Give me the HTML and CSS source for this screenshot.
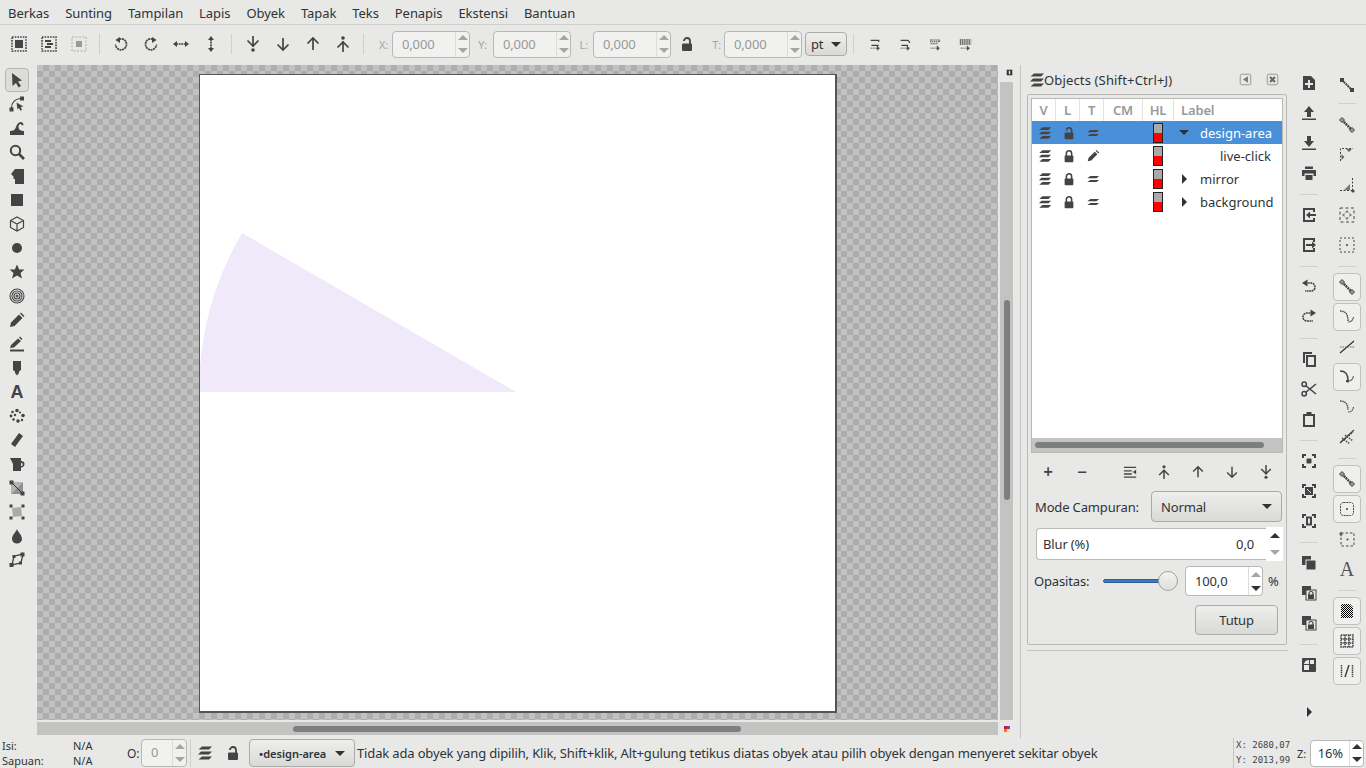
FILE: index.html
```html
<!DOCTYPE html>
<html>
<head>
    <title>Inkscape</title>
    <link rel="stylesheet" href="styles.css">
</head>
<body>
    <!-- Icon sprites -->
    <svg class="sprites" width="0" height="0">
        <defs>
            <symbol id="i-sel-all" viewBox="0 0 16 16"><rect x="1" y="1" width="14" height="14" fill="none" stroke="#444" stroke-width="1.600" stroke-dasharray="1.600 1.100"/><rect x="4" y="4" width="8" height="8"/></symbol>
            <symbol id="i-sel-layers" viewBox="0 0 16 16"><rect x="1" y="1" width="14" height="14" fill="none" stroke="#444" stroke-width="1.600" stroke-dasharray="1.600 1.100"/><path d="M4 4h6v2H4zM6 7h6v2H6zM4 10h6v2H4z"/></symbol>
            <symbol id="i-desel" viewBox="0 0 16 16"><rect x="1" y="1" width="14" height="14" fill="none" stroke="#aaa" stroke-width="1" stroke-dasharray="2 1.500"/><rect x="5" y="5" width="6" height="6" fill="#999"/></symbol>
            <symbol id="i-rot-ccw" viewBox="0 0 16 16"><path d="M4 4.500a5.500 5.500 0 1 1-1.500 4" fill="none" stroke="#444" stroke-width="1.700" stroke-dasharray="2 .6"/><path d="M7 1v6L2.500 4z"/></symbol>
            <symbol id="i-rot-cw" viewBox="0 0 16 16"><path d="M12 4.500a5.500 5.500 0 1 0 1.500 4" fill="none" stroke="#444" stroke-width="1.700" stroke-dasharray="2 .6"/><path d="M9 1v6l4.500-3z"/></symbol>
            <symbol id="i-flip-h" viewBox="0 0 16 16"><path d="M3 8h10" stroke="#444" stroke-width="1.600" stroke-dasharray="2 .6"/><path d="M0 8l4-3v6zM16 8l-4-3v6z"/></symbol>
            <symbol id="i-flip-v" viewBox="0 0 16 16"><path d="M8 3v10" stroke="#444" stroke-width="1.600" stroke-dasharray="2 .6"/><path d="M8 0l-3 4h6zM8 16l-3-4h6z"/></symbol>
            <symbol id="i-lower-bottom" viewBox="0 0 16 16"><path d="M8 0v11M2.500 4.500L8 10l5.500-5.500" fill="none" stroke="#444" stroke-width="1.700"/><circle cx="8" cy="14" r="1.800"/></symbol>
            <symbol id="i-lower" viewBox="0 0 16 16"><path d="M8 2v12M2.500 8.500L8 14l5.500-5.500" fill="none" stroke="#444" stroke-width="1.700"/></symbol>
            <symbol id="i-raise" viewBox="0 0 16 16"><path d="M8 14V2M2.500 7.500L8 2l5.500 5.500" fill="none" stroke="#444" stroke-width="1.700"/></symbol>
            <symbol id="i-raise-top" viewBox="0 0 16 16"><path d="M8 16V5M2.500 11.500L8 6l5.500 5.500" fill="none" stroke="#444" stroke-width="1.700"/><circle cx="8" cy="2" r="1.800"/></symbol>
            <symbol id="i-lock" viewBox="0 0 16 16"><path d="M5 8V5a3 3 0 0 1 6 0v3" fill="none" stroke="#444" stroke-width="1.800"/><rect x="3" y="7.500" width="10" height="7.500" rx="1"/></symbol>
            <symbol id="i-unlock" viewBox="0 0 16 16"><path d="M5 5a3 3 0 0 1 6 0v3" fill="none" stroke="#444" stroke-width="1.800"/><rect x="3" y="7.500" width="10" height="7.500" rx="1"/></symbol>
            <symbol id="i-layers" viewBox="0 0 16 16"><path d="M5 1.500h10l-3 3H1.500zM4 6.500h11l-3 3H1zM5 11.500h10l-3 3H1.500z"/></symbol>
            <symbol id="i-slant" viewBox="0 0 16 16"><path d="M5 4.500h10l-3 2.500H1.500zM5 9h10l-3 2.500H1.500z"/></symbol>
            <symbol id="i-pencil" viewBox="0 0 16 16"><path d="M2 14l1-4 7-7 3 3-7 7zM11 2l1-1 3 3-1 1z"/></symbol>
            <symbol id="i-trans-1" viewBox="0 0 16 16"><path d="M2 3h10v2M12 9H3" fill="none" stroke="#444" stroke-width="1.500"/><path d="M2 12.500h8M10 10l3 2.500-3 2.500z" stroke="#444" stroke-dasharray="1.500 .8"/></symbol>
            <symbol id="i-trans-2" viewBox="0 0 16 16"><path d="M2 3h9l2 2v1M3 9h8" fill="none" stroke="#444" stroke-width="1.500"/><path d="M2 12.500h8M10 10l3 2.500-3 2.500z" stroke="#444" stroke-dasharray="1.500 .8"/></symbol>
            <symbol id="i-trans-3" viewBox="0 0 16 16"><path d="M2 2.500h11v2H2zM2 7h9" fill="none" stroke="#444" stroke-width="1.300" stroke-dasharray="1.500 .8"/><path d="M2 12.500h8M10 10l3 2.500-3 2.500z" stroke="#444" stroke-dasharray="1.500 .8"/></symbol>
            <symbol id="i-trans-4" viewBox="0 0 16 16"><path d="M1 2.500h14M1 5h14M1 7.500h14" fill="none" stroke="#444" stroke-width="1.800" stroke-dasharray="1.500 .8"/><path d="M2 12.500h8M10 10l3 2.500-3 2.500z" stroke="#444" stroke-dasharray="1.500 .8"/></symbol>

            <symbol id="t-select" viewBox="0 0 16 16"><path d="M3 1l10 7.500-4 1 3 4.500-2.500 1.500L7 11l-3.500 3z"/></symbol>
            <symbol id="t-node" viewBox="0 0 16 16"><rect x="0.500" y="11.500" width="4" height="4"/><rect x="11" y="0.500" width="4" height="4"/><path d="M2.500 12C2.500 7 5.500 3.500 11 2.500" fill="none" stroke="#444" stroke-width="1.200"/><path d="M7.500 6.500l7 4-2.700.5 1.200 3-1.500.8-1.500-2.800-1.500 1.500z"/></symbol>
            <symbol id="t-tweak" viewBox="0 0 16 16"><path d="M1 15v-4c3 0 5-1 6-4 1-3 3-5.500 5-5 2 .5 2.500 2 2.500 3l-1.500.500c-.5-1.500-2-2-3-.5-1 2-.5 4 1 5 1 .7 3 1 4 1v4z"/></symbol>
            <symbol id="t-zoom" viewBox="0 0 16 16"><circle cx="6.500" cy="6.500" r="4.700" fill="none" stroke="#444" stroke-width="2"/><path d="M10 10l5 5" stroke="#444" stroke-width="2.600"/></symbol>
            <symbol id="t-pages" viewBox="0 0 16 16"><path d="M6 1h9v15H6v-5H4.500V8.500L2 6z"/></symbol>
            <symbol id="t-rect" viewBox="0 0 16 16"><rect x="2" y="2" width="12" height="12"/></symbol>
            <symbol id="t-box" viewBox="0 0 16 16"><path d="M8 1l6.500 3.500v7L8 15l-6.500-3.500v-7zM1.500 4.500L8 8l6.500-3.500M8 8v7" fill="none" stroke="#444" stroke-width="1.200"/></symbol>
            <symbol id="t-ellipse" viewBox="0 0 16 16"><circle cx="8" cy="8" r="5"/></symbol>
            <symbol id="t-star" viewBox="0 0 16 16"><path d="M8 0.500l2.200 5H15.500l-4 3.600 1.500 5.400L8 11.500 3 14.500l1.500-5.400-4-3.600H5.800z"/></symbol>
            <symbol id="t-spiral" viewBox="0 0 16 16"><g fill="none" stroke="#444" stroke-width="1.100"><circle cx="8" cy="8" r="7"/><circle cx="8" cy="8" r="5"/><circle cx="8" cy="8" r="3"/><circle cx="8" cy="8" r="1"/></g></symbol>
            <symbol id="t-pencil" viewBox="0 0 16 16"><path d="M1 15l1-4.500L10 2.500l3.500 3.500-8 8zM11 1.500l1-1 3.500 3.500-1 1z"/></symbol>
            <symbol id="t-pen" viewBox="0 0 16 16"><path d="M1 12l1-3 7-6.500L12 5l-7 6.500zM10 1.500l1-1L13.500 3l-1 1zM1 13.500h14V15.500H1z"/></symbol>
            <symbol id="t-callig" viewBox="0 0 16 16"><path d="M4 1h8v9l-2 1.500V13l-2 2.500L6 13v-1.500L4 10z"/></symbol>
            <symbol id="t-spray" viewBox="0 0 16 16"><circle cx="8" cy="2.500" r="1.800"/><circle cx="3.500" cy="4" r="1.300"/><circle cx="11" cy="4.500" r="1.100"/><circle cx="2" cy="8" r="1.400"/><circle cx="6" cy="7" r="1.200"/><circle cx="14" cy="7.500" r="1.800"/><circle cx="4.500" cy="11.500" r="1.300"/><circle cx="9" cy="13" r="1.800"/><circle cx="13" cy="12" r="1.200"/></symbol>
            <symbol id="t-eraser" viewBox="0 0 16 16"><path d="M10 1l4 3-8 11-4-3z"/></symbol>
            <symbol id="t-bucket" viewBox="0 0 16 16"><path d="M1 2h11v3c2 0 3.500 1 3.500 3s-1.500 3.500-3.500 3.500V15H4V8z"/><path d="M12 7v3c1 0 1.700-.5 1.700-1.500S13 7 12 7z" fill="#e8e8e7"/></symbol>
            <symbol id="t-gradient" viewBox="0 0 16 16"><path d="M2 2h12L2 14z" fill="#b4b4b4"/><path d="M14 2v12H2z" fill="#909090"/><path d="M2 2l12 12" stroke="#222" stroke-width=".9"/><rect x="0.500" y="0.500" width="4" height="4"/><rect x="11.500" y="11.500" width="4" height="4"/></symbol>
            <symbol id="t-mesh" viewBox="0 0 16 16"><path d="M3 4l9-1 1 9-9 1z" fill="#aaa"/><rect x="0.500" y="0.500" width="3" height="3"/><rect x="12.500" y="0.500" width="3" height="3"/><rect x="0.500" y="12.500" width="3" height="3"/><rect x="12.500" y="12.500" width="3" height="3"/></symbol>
            <symbol id="t-dropper" viewBox="0 0 16 16"><path d="M8 1c1 3 5 6 5 10a5 4.500 0 0 1-10 0c0-4 4-7 5-10z"/></symbol>
            <symbol id="t-connector" viewBox="0 0 16 16"><path d="M3 13L5 4l9-2-2 9z" fill="none" stroke="#444" stroke-width="1.300"/><rect x="0.500" y="11" width="4" height="4"/><rect x="11.500" y="0.500" width="4" height="4"/><rect x="10" y="9.500" width="3" height="3"/><rect x="3.500" y="3" width="3" height="3"/></symbol>

            <symbol id="c-new" viewBox="0 0 16 16"><path fill-rule="evenodd" d="M2 1h8l4 4v10H2zM7 5v3H4v2h3v3h2v-3h3V8H9V5z"/></symbol>
            <symbol id="c-open" viewBox="0 0 16 16"><path d="M8 1l5 6h-3v5H6V7H3zM1 13.500h14V15H1z"/></symbol>
            <symbol id="c-save" viewBox="0 0 16 16"><path d="M6 1h4v5h3l-5 6-5-6h3zM1 13.500h14V15H1z"/></symbol>
            <symbol id="c-print" viewBox="0 0 16 16"><path d="M4 1.500h8V4H4zM1 5h14v6h-2.500V8.500h-9V11H1zM4.500 10h7v5h-7z"/></symbol>
            <symbol id="c-import" viewBox="0 0 16 16"><path fill-rule="evenodd" d="M2 1h12v4h-2V3H4v10h8v-2h2v4H2z"/><path d="M5 8l4-3.500V7h6v2H9v2.500z"/></symbol>
            <symbol id="c-export" viewBox="0 0 16 16"><path fill-rule="evenodd" d="M2 1h12v4h-2V3H4v10h8v-2h2v4H2z"/><path d="M15 8l-4-3.500V7H5v2h6v2.500z"/></symbol>
            <symbol id="c-undo" viewBox="0 0 16 16"><path d="M4 4h6a4 4 0 0 1 0 8H4" fill="none" stroke="#444" stroke-width="1.600" stroke-dasharray="2 .6"/><path d="M6.500 0.500v7L1 4z"/></symbol>
            <symbol id="c-redo" viewBox="0 0 16 16"><path d="M12 4H6a4 4 0 0 0 0 8h6" fill="none" stroke="#444" stroke-width="1.600" stroke-dasharray="2 .6"/><path d="M9.500 0.500v7L15 4z"/></symbol>
            <symbol id="c-copy" viewBox="0 0 16 16"><path d="M2 1h9v2H4v9H2z"/><path fill-rule="evenodd" d="M5 4h10v12H5zM7 6v8h6V6z"/></symbol>
            <symbol id="c-cut" viewBox="0 0 16 16"><path d="M4.500 4.500L15 13M4.500 11.500L15 3" stroke="#444" stroke-width="1.600"/><circle cx="3.200" cy="3.200" r="2.200" fill="none" stroke="#444" stroke-width="1.500"/><circle cx="3.200" cy="12.800" r="2.200" fill="none" stroke="#444" stroke-width="1.500"/></symbol>
            <symbol id="c-paste" viewBox="0 0 16 16"><path fill-rule="evenodd" d="M5.500 1h5v2H14v13H2V3h3.500zM4 5v9h8V5z"/></symbol>
            <symbol id="c-zoom-sel" viewBox="0 0 16 16"><path d="M2 5V2h3M11 2h3v3M14 11v3h-3M5 14H2v-3" fill="none" stroke="#444" stroke-width="2"/><rect x="5.500" y="5.500" width="5" height="5" rx="1"/></symbol>
            <symbol id="c-zoom-draw" viewBox="0 0 16 16"><path d="M2 5V2h3M11 2h3v3M14 11v3h-3M5 14H2v-3" fill="none" stroke="#444" stroke-width="2"/><path d="M4 4h8v8H4z"/><path d="M6 6l4 4" stroke="#e8e8e7"/></symbol>
            <symbol id="c-zoom-page" viewBox="0 0 16 16"><path d="M2 5V2h3M11 2h3v3M14 11v3h-3M5 14H2v-3" fill="none" stroke="#444" stroke-width="2"/><path fill-rule="evenodd" d="M5 3.500h6v9H5zM7 5.500v5h2v-5z"/></symbol>
            <symbol id="c-dup" viewBox="0 0 16 16"><rect x="1" y="1" width="9" height="9"/><rect x="5" y="5" width="10" height="10" stroke="#e8e8e7"/></symbol>
            <symbol id="c-clone" viewBox="0 0 16 16"><rect x="1" y="1" width="9" height="9"/><rect x="5" y="5" width="10" height="10" fill="#e8e8e7" stroke="#444"/><path d="M8 10V8.500a2 2 0 0 1 4 0V10" fill="none" stroke="#444" stroke-width="1.200"/><rect x="7" y="9.500" width="6" height="4.500"/></symbol>
            <symbol id="c-unclone" viewBox="0 0 16 16"><rect x="1" y="1" width="9" height="9"/><rect x="5" y="5" width="10" height="10" fill="#e8e8e7" stroke="#444"/><path d="M8 8.500a2 2 0 0 1 4 0V10" fill="none" stroke="#444" stroke-width="1.200"/><rect x="7" y="9.500" width="6" height="4.500"/></symbol>
            <symbol id="c-group" viewBox="0 0 16 16"><path fill-rule="evenodd" d="M2 1h12a1 1 0 0 1 1 1v12a1 1 0 0 1-1 1H2a1 1 0 0 1-1-1V2a1 1 0 0 1 1-1zM3 8v5h5V8zM8 3a5 5 0 0 0-5 4h5zM9 3v4h4V3z"/></symbol>

            <symbol id="s-enable" viewBox="0 0 16 16"><path d="M3 3l10 10" stroke="#444" stroke-width="2" stroke-dasharray="2 .6"/><rect x="1" y="1" width="4" height="4"/><rect x="11" y="11" width="4" height="4"/></symbol>
            <symbol id="s-node-line" viewBox="0 0 16 16"><path d="M3 3l10 10" stroke="#444" stroke-width="2.500" stroke-dasharray="2 .6"/><path d="M3 .5L5.500 3 3 5.500.5 3zM13 10.500l2.500 2.500-2.500 2.500-2.500-2.500z" stroke="#444" fill="#999"/></symbol>
            <symbol id="s-corners" viewBox="0 0 16 16"><path d="M1.500 14V1.500H14" fill="none" stroke="#444" stroke-dasharray="2 1.500"/><path d="M7 2h6L10 5zM2.500 7v6L5.500 10z" fill="#666"/></symbol>
            <symbol id="s-midpoint" viewBox="0 0 16 16"><path d="M1 13.500h12M13.500 1v12" fill="none" stroke="#444" stroke-dasharray="2 1.500"/><path d="M5 13l6-6v6z" fill="#777"/><circle cx="14" cy="14" r="1.600"/></symbol>
            <symbol id="s-bbox-mid" viewBox="0 0 16 16"><rect x="1" y="1" width="14" height="14" fill="none" stroke="#444" stroke-dasharray="3 2.500"/><path d="M8 3l2 2.500H6zM8 13l2-2.500H6zM3 8l2.500-2v4zM13 8l-2.500-2v4z" fill="#777"/></symbol>
            <symbol id="s-center" viewBox="0 0 16 16"><rect x="1" y="1" width="14" height="14" fill="none" stroke="#444" stroke-dasharray="2 2"/><circle cx="8" cy="8" r="1"/></symbol>
            <symbol id="s-path" viewBox="0 0 16 16"><path d="M1 2c5 0 8 2.500 8 10" fill="none" stroke="#444" stroke-dasharray="1.500 .7" stroke-width="1.400"/><path d="M9 13c3 0 5-1.500 5.500-5" fill="none" stroke="#666" stroke-width="1.200"/></symbol>
            <symbol id="s-path-node" viewBox="0 0 16 16"><path d="M1 2c5 0 8 2.500 8 9" fill="none" stroke="#444" stroke-width="1.400"/><path d="M9 12c3 0 5-1.500 5.500-5" fill="none" stroke="#666" stroke-width="1.200"/><circle cx="8.500" cy="12" r="1.600"/></symbol>
            <symbol id="s-cross" viewBox="0 0 16 16"><path d="M1 14L15 2" stroke="#333" stroke-width="1.200"/><path d="M1 8h14" stroke="#666" stroke-dasharray="1.500 1"/></symbol>
            <symbol id="s-smooth" viewBox="0 0 16 16"><path d="M1 2c5 0 8 2.500 8 9" fill="none" stroke="#444" stroke-dasharray="1.500 .7" stroke-width="1.400"/><path d="M9 13c3 0 5-1.500 5.500-5" fill="none" stroke="#555" stroke-dasharray="1.500 .7" stroke-width="1.200"/></symbol>
            <symbol id="s-guide" viewBox="0 0 16 16"><path d="M1 14L15 1" stroke="#444" stroke-width="1.200"/><path d="M3 9l8 6M6 6l8 6M2 13L14 3" stroke="#444" stroke-dasharray="1.500 1" stroke-width="1.500"/></symbol>
            <symbol id="s-page-box" viewBox="0 0 16 16"><rect x="1.500" y="1.500" width="13" height="13" rx="3" fill="none" stroke="#444" stroke-dasharray="2 .8"/><circle cx="8" cy="8" r="1"/></symbol>
            <symbol id="s-rotcenter" viewBox="0 0 16 16"><rect x="2" y="2" width="13" height="13" fill="none" stroke="#444" stroke-dasharray="2.500 2"/><circle cx="8.500" cy="8.500" r="1"/><path d="M2 .5L4 3 2 5.500 0 3z" fill="#666"/></symbol>
            <symbol id="s-page" viewBox="0 0 16 16"><pattern id="p-dots" width="2" height="2" patternUnits="userSpaceOnUse"><rect width="1" height="1"/><rect x="1" y="1" width="1" height="1"/></pattern><path d="M2 1h9l3 3v11H2z" fill="url(#p-dots)"/></symbol>
            <symbol id="s-grid" viewBox="0 0 16 16"><path d="M2 2h12v12H2zM6 2v12M10 2v12M2 6h12M2 10h12" fill="none" stroke="#444" stroke-width="1.500" stroke-dasharray="1.500 .7"/></symbol>
            <symbol id="s-guides" viewBox="0 0 16 16"><path d="M2.500 2v12M13.500 2v12" stroke="#444" stroke-width="1.500" stroke-dasharray="1.500 .7"/><path d="M10 2L6 14" stroke="#444" stroke-width="1.500"/></symbol>

            <symbol id="d-indent" viewBox="0 0 16 16"><path d="M1 2h14v1.500H1zM1 6h9v1.500H1zM1 9.500h9V11H1zM1 13h14v1.500H1zM15 5.500v5L11 8z"/></symbol>
            <symbol id="d-close" viewBox="0 0 16 16"><rect x="1.500" y="1.500" width="13" height="13" rx="2" fill="none" stroke="#888"/><path d="M5 5l6 6M11 5l-6 6" stroke="#666" stroke-width="2.500"/></symbol>
            <symbol id="d-collapse" viewBox="0 0 16 16"><rect x="1.500" y="1.500" width="13" height="13" rx="2" fill="none" stroke="#888"/><path d="M11 4v8L5 8z" fill="#777"/></symbol>
            <symbol id="d-mini" viewBox="0 0 10 10"><path d="M1 1h8v8H1z"/><path d="M4 2.500h2v5H4z" fill="#e8e8e7"/></symbol>
            <symbol id="d-colors" viewBox="0 0 6 6"><path d="M0 0h3v3H0z" fill="#c2185b"/><path d="M3 0h3v3H3z" fill="#7b3fc4"/><path d="M0 3h3v3H0z" fill="#f57c00"/><path d="M3 3h3v3H3z" fill="#ffeb3b"/></symbol>
        </defs>
    </svg>

    <div class="menubar">
        <span>Berkas</span><span>Sunting</span><span>Tampilan</span><span>Lapis</span><span>Obyek</span><span>Tapak</span><span>Teks</span><span>Penapis</span><span>Ekstensi</span><span>Bantuan</span>
    </div>

    <!-- Top tool controls -->
    <div class="toolbar">
        <span class="tbtn"><svg class="ic"><use href="#i-sel-all"/></svg></span>
        <span class="tbtn"><svg class="ic"><use href="#i-sel-layers"/></svg></span>
        <span class="tbtn"><svg class="ic"><use href="#i-desel"/></svg></span>
        <i class="vsep"></i>
        <span class="tbtn"><svg class="ic"><use href="#i-rot-ccw"/></svg></span>
        <span class="tbtn"><svg class="ic"><use href="#i-rot-cw"/></svg></span>
        <span class="tbtn"><svg class="ic"><use href="#i-flip-h"/></svg></span>
        <span class="tbtn"><svg class="ic"><use href="#i-flip-v"/></svg></span>
        <i class="vsep"></i>
        <span class="tbtn"><svg class="ic"><use href="#i-lower-bottom"/></svg></span>
        <span class="tbtn"><svg class="ic"><use href="#i-lower"/></svg></span>
        <span class="tbtn"><svg class="ic"><use href="#i-raise"/></svg></span>
        <span class="tbtn"><svg class="ic"><use href="#i-raise-top"/></svg></span>
        <i class="vsep"></i>
        <span class="coord-label label-x">X:</span>
        <div class="spin spin-off coord"><span class="spin-val">0,000</span><span class="spin-arrows"><b class="up"></b><b class="down"></b></span></div>
        <span class="coord-label label-y">Y:</span>
        <div class="spin spin-off coord"><span class="spin-val">0,000</span><span class="spin-arrows"><b class="up"></b><b class="down"></b></span></div>
        <span class="coord-label label-l">L:</span>
        <div class="spin spin-off coord"><span class="spin-val">0,000</span><span class="spin-arrows"><b class="up"></b><b class="down"></b></span></div>
        <span class="lock-btn"><svg class="ic"><use href="#i-unlock"/></svg></span>
        <span class="coord-label label-t">T:</span>
        <div class="spin spin-off coord"><span class="spin-val">0,000</span><span class="spin-arrows"><b class="up"></b><b class="down"></b></span></div>
        <div class="select unit-select"><span>pt</span><b class="caret"></b></div>
        <i class="vsep vsep-unit"></i>
        <span class="tbtn"><svg class="ic ic-trans"><use href="#i-trans-1"/></svg></span>
        <span class="tbtn"><svg class="ic ic-trans"><use href="#i-trans-2"/></svg></span>
        <span class="tbtn"><svg class="ic ic-trans"><use href="#i-trans-3"/></svg></span>
        <span class="tbtn"><svg class="ic ic-trans"><use href="#i-trans-4"/></svg></span>
    </div>

    <div class="main">
        <!-- Left toolbox -->
        <div class="toolbox">
            <span class="tool tool-on"><svg class="ic"><use href="#t-select"/></svg></span>
            <span class="tool"><svg class="ic"><use href="#t-node"/></svg></span>
            <span class="tool"><svg class="ic"><use href="#t-tweak"/></svg></span>
            <span class="tool"><svg class="ic"><use href="#t-zoom"/></svg></span>
            <span class="tool"><svg class="ic"><use href="#t-pages"/></svg></span>
            <span class="tool"><svg class="ic"><use href="#t-rect"/></svg></span>
            <span class="tool"><svg class="ic"><use href="#t-box"/></svg></span>
            <span class="tool"><svg class="ic"><use href="#t-ellipse"/></svg></span>
            <span class="tool"><svg class="ic"><use href="#t-star"/></svg></span>
            <span class="tool"><svg class="ic"><use href="#t-spiral"/></svg></span>
            <span class="tool"><svg class="ic"><use href="#t-pencil"/></svg></span>
            <span class="tool"><svg class="ic"><use href="#t-pen"/></svg></span>
            <span class="tool"><svg class="ic"><use href="#t-callig"/></svg></span>
            <span class="tool tool-text">A</span>
            <span class="tool"><svg class="ic"><use href="#t-spray"/></svg></span>
            <span class="tool"><svg class="ic"><use href="#t-eraser"/></svg></span>
            <span class="tool"><svg class="ic"><use href="#t-bucket"/></svg></span>
            <span class="tool"><svg class="ic"><use href="#t-gradient"/></svg></span>
            <span class="tool"><svg class="ic"><use href="#t-mesh"/></svg></span>
            <span class="tool"><svg class="ic"><use href="#t-dropper"/></svg></span>
            <span class="tool"><svg class="ic"><use href="#t-connector"/></svg></span>
        </div>

        <!-- Canvas with its scrollbars -->
        <div class="workspace">
            <div class="canvas-row">
                <div class="canvas">
                    <div class="page">
                        <svg class="artwork" width="636" height="636" viewBox="200 75 636 636"><path d="M516 392L242 233A317 317 0 0 0 199 392Z" fill="#efe9f9"/></svg>
                    </div>
                </div>
                <div class="vscroll">
                    <svg class="ruler-mini"><use href="#d-mini"/></svg>
                    <div class="vtrack"><div class="vthumb"></div></div>
                </div>
            </div>
            <div class="hscroll-row">
                <div class="htrack"><div class="hthumb"></div></div>
                <svg class="cms-mini"><use href="#d-colors"/></svg>
            </div>
        </div>

        <!-- Objects dock -->
        <div class="dock">
            <div class="dock-title">
                <svg class="ic"><use href="#i-layers"/></svg>
                <span class="dock-name">Objects (Shift+Ctrl+J)</span>
                <svg class="ic dock-btn"><use href="#d-collapse"/></svg>
                <svg class="ic dock-btn dock-close"><use href="#d-close"/></svg>
            </div>
            <div class="dock-frame">
                <div class="objects">
                    <div class="obj-row obj-head">
                        <span>V</span><span>L</span><span>T</span><span>CM</span><span>HL</span><span class="head-label">Label</span>
                    </div>
                    <div class="obj-row obj-selected">
                        <span class="obj-flag"><svg class="ic ic-sm"><use href="#i-layers"/></svg></span>
                        <span class="obj-flag"><svg class="ic ic-sm"><use href="#i-unlock"/></svg></span>
                        <span class="obj-flag"><svg class="ic ic-sm"><use href="#i-slant"/></svg></span>
                        <span></span>
                        <span><i class="swatch"></i></span>
                        <span class="obj-label"><b class="tree-open"></b>design-area</span>
                    </div>
                    <div class="obj-row">
                        <span class="obj-flag"><svg class="ic ic-sm"><use href="#i-layers"/></svg></span>
                        <span class="obj-flag"><svg class="ic ic-sm"><use href="#i-lock"/></svg></span>
                        <span class="obj-flag"><svg class="ic ic-sm"><use href="#i-pencil"/></svg></span>
                        <span></span>
                        <span><i class="swatch"></i></span>
                        <span class="obj-label obj-child">live-click</span>
                    </div>
                    <div class="obj-row">
                        <span class="obj-flag"><svg class="ic ic-sm"><use href="#i-layers"/></svg></span>
                        <span class="obj-flag"><svg class="ic ic-sm"><use href="#i-lock"/></svg></span>
                        <span class="obj-flag"><svg class="ic ic-sm"><use href="#i-slant"/></svg></span>
                        <span></span>
                        <span><i class="swatch"></i></span>
                        <span class="obj-label"><b class="tree-closed"></b>mirror</span>
                    </div>
                    <div class="obj-row">
                        <span class="obj-flag"><svg class="ic ic-sm"><use href="#i-layers"/></svg></span>
                        <span class="obj-flag"><svg class="ic ic-sm"><use href="#i-lock"/></svg></span>
                        <span class="obj-flag"><svg class="ic ic-sm"><use href="#i-slant"/></svg></span>
                        <span></span>
                        <span><i class="swatch"></i></span>
                        <span class="obj-label"><b class="tree-closed"></b>background</span>
                    </div>
                    <div class="obj-fill"></div>
                    <div class="obj-scroll"><div class="obj-thumb"></div></div>
                </div>

                <div class="obj-actions">
                    <span class="plusminus">+</span>
                    <span class="plusminus">−</span>
                    <span class="obj-spacer"></span>
                    <svg class="ic ic-act"><use href="#d-indent"/></svg>
                    <svg class="ic ic-act"><use href="#i-raise-top"/></svg>
                    <svg class="ic ic-act"><use href="#i-raise"/></svg>
                    <svg class="ic ic-act"><use href="#i-lower"/></svg>
                    <svg class="ic ic-act"><use href="#i-lower-bottom"/></svg>
                </div>

                <div class="blend-row">
                    <span>Mode Campuran:</span>
                    <div class="select blend-select"><span>Normal</span><b class="caret"></b></div>
                </div>

                <div class="blur-row">
                    <div class="blur-field"><span>Blur (%)</span><span>0,0</span></div>
                    <div class="blur-arrows"><b class="up"></b><b class="down dim"></b></div>
                </div>

                <div class="opacity-row">
                    <span class="opacity-label">Opasitas:</span>
                    <div class="slider"><i class="slider-fill"></i><i class="slider-knob"></i></div>
                    <div class="spin opacity-spin"><span class="spin-val">100,0</span><span class="spin-arrows"><b class="up dim"></b><b class="down"></b></span></div>
                    <span class="opacity-unit">%</span>
                </div>

                <div class="close-row"><span class="close-btn">Tutup</span></div>
            </div>
            <div class="dock-rule"></div>
        </div>

        <!-- Commands bar -->
        <div class="cmdbar">
            <span class="cmd"><svg class="ic"><use href="#c-new"/></svg></span>
            <span class="cmd"><svg class="ic"><use href="#c-open"/></svg></span>
            <span class="cmd"><svg class="ic"><use href="#c-save"/></svg></span>
            <span class="cmd"><svg class="ic"><use href="#c-print"/></svg></span>
            <i class="hsep"></i>
            <span class="cmd"><svg class="ic"><use href="#c-import"/></svg></span>
            <span class="cmd"><svg class="ic"><use href="#c-export"/></svg></span>
            <i class="hsep"></i>
            <span class="cmd"><svg class="ic"><use href="#c-undo"/></svg></span>
            <span class="cmd"><svg class="ic"><use href="#c-redo"/></svg></span>
            <i class="hsep"></i>
            <span class="cmd"><svg class="ic"><use href="#c-copy"/></svg></span>
            <span class="cmd"><svg class="ic"><use href="#c-cut"/></svg></span>
            <span class="cmd"><svg class="ic"><use href="#c-paste"/></svg></span>
            <i class="hsep"></i>
            <span class="cmd"><svg class="ic"><use href="#c-zoom-sel"/></svg></span>
            <span class="cmd"><svg class="ic"><use href="#c-zoom-draw"/></svg></span>
            <span class="cmd"><svg class="ic"><use href="#c-zoom-page"/></svg></span>
            <i class="hsep"></i>
            <span class="cmd"><svg class="ic"><use href="#c-dup"/></svg></span>
            <span class="cmd"><svg class="ic"><use href="#c-clone"/></svg></span>
            <span class="cmd"><svg class="ic"><use href="#c-unclone"/></svg></span>
            <i class="hsep"></i>
            <span class="cmd"><svg class="ic"><use href="#c-group"/></svg></span>
            <b class="more-arrow"></b>
        </div>

        <!-- Snap bar -->
        <div class="snapbar">
            <span class="cmd"><svg class="ic"><use href="#s-enable"/></svg></span>
            <i class="hsep hsep-first"></i>
            <span class="cmd"><svg class="ic"><use href="#s-node-line"/></svg></span>
            <span class="cmd"><svg class="ic"><use href="#s-corners"/></svg></span>
            <span class="cmd"><svg class="ic"><use href="#s-midpoint"/></svg></span>
            <span class="cmd"><svg class="ic"><use href="#s-bbox-mid"/></svg></span>
            <span class="cmd"><svg class="ic"><use href="#s-center"/></svg></span>
            <i class="hsep"></i>
            <span class="cmd cmd-on"><svg class="ic"><use href="#s-node-line"/></svg></span>
            <span class="cmd cmd-on"><svg class="ic"><use href="#s-path"/></svg></span>
            <span class="cmd"><svg class="ic"><use href="#s-cross"/></svg></span>
            <span class="cmd cmd-on"><svg class="ic"><use href="#s-path-node"/></svg></span>
            <span class="cmd"><svg class="ic"><use href="#s-smooth"/></svg></span>
            <span class="cmd"><svg class="ic"><use href="#s-guide"/></svg></span>
            <i class="hsep"></i>
            <span class="cmd cmd-on"><svg class="ic"><use href="#s-node-line"/></svg></span>
            <span class="cmd cmd-on"><svg class="ic"><use href="#s-page-box"/></svg></span>
            <span class="cmd"><svg class="ic"><use href="#s-rotcenter"/></svg></span>
            <span class="cmd snap-text">A</span>
            <i class="hsep"></i>
            <span class="cmd cmd-on"><svg class="ic"><use href="#s-page"/></svg></span>
            <span class="cmd cmd-on"><svg class="ic"><use href="#s-grid"/></svg></span>
            <span class="cmd cmd-on"><svg class="ic"><use href="#s-guides"/></svg></span>
        </div>
    </div>

    <!-- Status bar -->
    <div class="statusbar">
        <div class="style-info">
            <span>Isi:</span><span>N/A</span>
            <span>Sapuan:</span><span>N/A</span>
        </div>
        <span class="o-label">O:</span>
        <div class="spin spin-off o-spin"><span class="spin-val">0</span><span class="spin-arrows"><b class="up"></b><b class="down"></b></span></div>
        <i class="vsep vsep-status"></i>
        <span class="status-icon"><svg class="ic"><use href="#i-layers"/></svg></span>
        <span class="status-icon"><svg class="ic"><use href="#i-unlock"/></svg></span>
        <div class="select layer-select"><span>•design-area</span><b class="caret"></b></div>
        <span class="status-msg">Tidak ada obyek yang dipilih, Klik, Shift+klik, Alt+gulung tetikus diatas obyek atau pilih obyek dengan menyeret sekitar obyek</span>
        <div class="coords"><span>X: 2680,07</span><span>Y: 2013,99</span></div>
        <span class="z-label">Z:</span>
        <div class="spin z-spin"><span class="spin-val">16%</span><span class="spin-arrows"><b class="up"></b><b class="down"></b></span></div>
    </div>
</body>
</html>
```

FILE: styles.css
```css
/* Reset default margin and padding */
* {
    margin: 0;
    padding: 0;
    box-sizing: border-box;
}

body {
    width: 1366px;
    height: 768px;
    overflow: hidden;
    display: flex;
    flex-direction: column;
    background-color: #e8e8e7;
    color: #2e3436;
    font-family: "Noto Sans", sans-serif;
    font-size: 13px;
    letter-spacing: -0.15px;
}

.sprites {
    position: absolute;
}

i, b {
    display: block;
}

.ic {
    width: 16px;
    height: 16px;
    fill: #444;
    display: block;
    flex: none;
}

.ic-trans {
    width: 13px;
    height: 13px;
}

/* Menu bar */
.menubar {
    height: 25px;
    flex: none;
    display: flex;
    align-items: center;
    gap: 16px;
    padding: 1px 8px 0;
    border-bottom: 1px solid #cfcfcd;
    letter-spacing: -0.07px;
}

/* Top toolbar */
.toolbar {
    height: 38px;
    margin-bottom: 2px;
    flex: none;
    display: flex;
    align-items: center;
    padding-left: 4px;
}

.tbtn {
    width: 30px;
    height: 30px;
    display: flex;
    align-items: center;
    justify-content: center;
}

.vsep {
    width: 1px;
    height: 20px;
    margin: 0 6px 0 5px;
    background-color: #cfcfcd;
}

.coord-label {
    color: #a5a5a5;
    font-size: 11px;
    text-align: right;
    padding-right: 4px;
}

.label-x { width: 22px; }
.label-y { width: 23px; padding-right: 6px; }
.label-l { width: 22px; padding-right: 5px; }
.label-t { width: 21px; padding-right: 3px; }

.lock-btn {
    width: 32px;
    display: flex;
    justify-content: center;
}

/* Spin buttons */
.spin {
    height: 27px;
    display: flex;
    background-color: #fff;
    border: 1px solid #b8b8b6;
    border-radius: 4px;
    flex: none;
}

.spin-off {
    background-color: #f1f1f0;
    color: #999;
}

.spin-val {
    flex: 1;
    padding-left: 9px;
    line-height: 25px;
    font-size: 13px;
}

.spin-arrows {
    width: 14px;
    display: flex;
    flex-direction: column;
    border-left: 1px solid #dcdcda;
}

.spin-arrows b,
.blur-arrows b {
    flex: 1;
    display: flex;
    align-items: center;
    justify-content: center;
}

.up::before,
.down::before {
    content: "";
    border-left: 5px solid transparent;
    border-right: 5px solid transparent;
}

.up::before { border-bottom: 5px solid #2e3436; }
.down::before { border-top: 5px solid #2e3436; }

.spin-off .up::before,
.dim.up::before { border-bottom-color: #a5a5a5; }

.spin-off .down::before,
.dim.down::before { border-top-color: #a5a5a5; }

.coord {
    width: 78px;
}

/* Dropdown buttons */
.select {
    display: flex;
    align-items: center;
    justify-content: space-between;
    background: linear-gradient(#eeeeec, #d9d9d6);
    border: 1px solid #aaaaa8;
    border-radius: 4px;
    flex: none;
}

.caret {
    border-left: 5px solid transparent;
    border-right: 5px solid transparent;
    border-top: 5px solid #2e3436;
}

.unit-select {
    width: 42px;
    height: 24px;
    margin-left: 3px;
    padding: 0 5px;
}

.vsep-unit {
    margin: 0 6px;
}

/* Main row */
.main {
    flex: 1;
    display: flex;
    min-height: 0;
}

/* Left toolbox */
.toolbox {
    width: 37px;
    flex: none;
    display: flex;
    flex-direction: column;
    padding: 3px 0 0 5px;
}

.tool {
    width: 24px;
    height: 24px;
    display: flex;
    align-items: center;
    justify-content: center;
    border: 1px solid transparent;
    border-radius: 4px;
}

.tool-on {
    background-color: #dcdcda;
    border-color: #b8b8b6;
}

.tool-text {
    font-family: "Liberation Sans", sans-serif;
    font-size: 18px;
    font-weight: bold;
    color: #444;
}

/* Workspace */
.workspace {
    width: 984px;
    flex: none;
    display: flex;
    flex-direction: column;
    border-right: 1px solid #c4c4c2;
}

.canvas-row {
    height: 655px;
    display: flex;
}

.canvas {
    width: 961px;
    position: relative;
    background: repeating-conic-gradient(#adadad 0 25%, #c2c2c2 0 50%) 0 0 / 12px 12px;
}

/* The page sits on a free canvas */
.page {
    position: absolute;
    left: 162px;
    top: 9px;
    width: 638px;
    height: 639px;
    background-color: #fff;
    border: 1px solid #555;
    border-right-width: 2px;
    border-bottom-width: 2px;
}

.artwork {
    display: block;
}

.vscroll {
    width: 15px;
    margin-left: 2px;
    display: flex;
    flex-direction: column;
}

.ruler-mini {
    width: 7px;
    height: 7px;
    margin: 4px 0 6px 6px;
    fill: #333;
    flex: none;
}

.vtrack {
    flex: 1;
    margin-right: 2px;
    background-color: #c3c4c2;
}

.vthumb {
    width: 6px;
    height: 200px;
    margin: 218px 0 0 4px;
    background-color: #7c7f7f;
    border-radius: 3px;
}

.hscroll-row {
    display: flex;
    align-items: flex-start;
    margin-top: 2px;
}

.htrack {
    width: 961px;
    height: 13px;
    margin-left: 0;
    padding-top: 4px;
    background-color: #c3c4c2;
}

.hthumb {
    width: 448px;
    height: 6px;
    margin-left: 256px;
    background-color: #7c7f7f;
    border-radius: 3px;
}

.cms-mini {
    width: 6px;
    height: 6px;
    margin: 4px 0 0 6px;
}

/* Objects dock */
.dock {
    width: 273px;
    flex: none;
    padding: 0 6px 0 6px;
}

.dock-title {
    height: 29px;
    display: flex;
    align-items: center;
    padding: 0 9px 0 2px;
}

.dock-name {
    flex: 1;
    margin-left: -1px;
    letter-spacing: 0.15px;
}

.dock-btn {
    width: 13px;
    height: 13px;
}

.dock-close {
    margin-left: 14px;
}

.dock-frame {
    width: 260px;
    height: 551px;
    padding: 3px;
    border: 1px solid #b8b8b6;
    border-radius: 2px;
}

.objects {
    height: 355px;
    display: flex;
    flex-direction: column;
    background-color: #fff;
    border: 1px solid #b8b8b6;
}

.obj-row {
    height: 23px;
    flex: none;
    display: grid;
    grid-template-columns: 24px 24px 24px 39px 31px 1fr;
    align-items: center;
    font-size: 13px;
}

.obj-row > span {
    display: flex;
    justify-content: center;
    align-items: center;
    height: 100%;
}

.obj-row > .obj-flag {
    padding-left: 2px;
}

.obj-head {
    height: 22px;
    color: #999;
    font-weight: 600;
}

.obj-head > span {
    border-right: 1px solid #e4e4e2;
}

.obj-head .head-label {
    border-right: none;
    justify-content: flex-start;
    padding-left: 7px;
}

.obj-selected {
    background-color: #4a90d9;
    color: #fff;
}

.ic-sm {
    width: 14px;
    height: 14px;
}

.swatch {
    width: 10px;
    height: 20px;
    margin-right: 1px;
    border: 1px solid #222;
    background: linear-gradient(#aaa 50%, #f00 50%);
}

.obj-row > .obj-label {
    justify-content: flex-start;
    padding-left: 4px;
    letter-spacing: 0;
}

.obj-row > .obj-child {
    padding-left: 46px;
}

.tree-open,
.tree-closed {
    width: 16px;
    margin-left: -1px;
    margin-right: 7px;
    flex: none;
}

.tree-open::before {
    content: "";
    display: block;
    margin-left: 2px;
    width: 0;
    border-left: 5px solid transparent;
    border-right: 5px solid transparent;
    border-top: 5px solid #2e3436;
}

.tree-closed::before {
    content: "";
    display: block;
    margin-left: 5px;
    width: 0;
    border-top: 5px solid transparent;
    border-bottom: 5px solid transparent;
    border-left: 5px solid #2e3436;
}

.obj-fill {
    flex: 1;
}

.obj-scroll {
    height: 14px;
    padding: 4px 0 0 3px;
    background-color: #c3c4c2;
}

.obj-thumb {
    width: 229px;
    height: 6px;
    background-color: #7c7f7f;
    border-radius: 3px;
}

.obj-actions {
    height: 37px;
    display: flex;
    align-items: center;
    padding-left: 8px;
}

.plusminus {
    width: 18px;
    flex: none;
    text-align: center;
    font-size: 17px;
    font-weight: 600;
    color: #444;
    margin-right: 16px;
}

.obj-spacer {
    width: 16px;
    flex: none;
}

.ic-act {
    width: 14px;
    height: 14px;
    margin-right: 20px;
}

.blend-row {
    display: flex;
    align-items: center;
    justify-content: space-between;
    height: 33px;
    padding: 0 1px 0 4px;
}

.blend-select {
    width: 131px;
    height: 31px;
    padding: 0 9px;
}

.blur-row {
    display: flex;
    height: 34px;
    margin: 4px 0 0 5px;
}

.blur-field {
    width: 230px;
    height: 32px;
    margin-top: 1px;
    display: flex;
    justify-content: space-between;
    align-items: center;
    padding: 0 12px 0 6px;
    background-color: #fff;
    border: 1px solid #b8b8b6;
    border-radius: 4px 0 0 4px;
    border-right: none;
}

.blur-arrows {
    width: 17px;
    display: flex;
    flex-direction: column;
    background-color: #fff;
}

.opacity-row {
    display: flex;
    align-items: center;
    height: 30px;
    margin-top: 5px;
    padding-left: 3px;
}

.opacity-label {
    width: 69px;
}

.slider {
    width: 76px;
    height: 22px;
    position: relative;
    margin-right: 6px;
}

.slider-fill {
    width: 70px;
    height: 4px;
    margin-top: 9px;
    background-color: #3d7bbf;
    border: 1px solid #2e6096;
    border-radius: 2px;
}

/* Knob lies over the slider groove */
.slider-knob {
    position: absolute;
    left: 55px;
    top: 1px;
    width: 20px;
    height: 20px;
    background: linear-gradient(#f2f2f1, #dededc);
    border: 1px solid #a0a09e;
    border-radius: 50%;
}

.opacity-spin {
    width: 78px;
    height: 30px;
}

.opacity-spin .spin-val {
    line-height: 28px;
}

.opacity-unit {
    margin-left: 5px;
}

.close-row {
    display: flex;
    justify-content: flex-end;
    margin-top: 9px;
    padding-right: 5px;
}

.close-btn {
    width: 83px;
    height: 30px;
    line-height: 28px;
    text-align: center;
    background: linear-gradient(#eeeeec, #d9d9d6);
    border: 1px solid #aaaaa8;
    border-radius: 4px;
}

.dock-rule {
    width: 261px;
    height: 1px;
    margin-top: 5px;
    background-color: #c4c4c2;
}

/* Right command and snap bars */
.cmdbar,
.snapbar {
    flex: none;
    display: flex;
    flex-direction: column;
    align-items: center;
    padding-top: 3px;
}

.cmdbar {
    width: 30px;
}

.snapbar {
    width: 30px;
    margin-left: 8px;
    padding-top: 5px;
}

.cmd {
    width: 28px;
    height: 30px;
    flex: none;
    display: flex;
    align-items: center;
    justify-content: center;
}

.cmd-on {
    background-color: #efefee;
    border: 1px solid #c0c0be;
    border-radius: 4px;
    height: 28px;
    margin: 1px 0;
}

.snap-text {
    font-family: "Liberation Serif", serif;
    font-size: 20px;
    color: #555;
}

.hsep {
    width: 18px;
    height: 1px;
    margin: 6px 0 5px;
    background-color: #cfcfcd;
    flex: none;
}

.hsep-first {
    margin: 3px 0 6px;
}

.more-arrow {
    margin-top: auto;
    margin-bottom: 21px;
    border-top: 5px solid transparent;
    border-bottom: 5px solid transparent;
    border-left: 5px solid #2e3436;
}

/* Status bar */
.statusbar {
    height: 30px;
    flex: none;
    display: flex;
    align-items: center;
    padding-left: 2px;
}

.style-info {
    width: 125px;
    display: grid;
    grid-template-columns: 71px 1fr;
    font-size: 11px;
    line-height: 15px;
    letter-spacing: 0;
}

.o-label {
    width: 14px;
    font-size: 12px;
}

.o-spin {
    width: 46px;
    height: 28px;
}

.o-spin .spin-arrows {
    width: 14px;
}

.vsep-status {
    height: 28px;
    margin: 0 0 0 3px;
}

.status-icon {
    width: 28px;
    display: flex;
    justify-content: center;
}

.layer-select {
    width: 106px;
    height: 28px;
    margin-left: 2px;
    padding: 0 9px;
    font-size: 11px;
    font-weight: 600;
    letter-spacing: 0;
}

.status-msg {
    margin-left: 2px;
    width: 876px;
    flex: none;
    white-space: nowrap;
}

.coords {
    width: 62px;
    height: 30px;
    padding-left: 2px;
    display: flex;
    flex-direction: column;
    border-left: 1px solid #c4c4c2;
    font-family: "DejaVu Sans Mono", monospace;
    font-size: 9px;
    line-height: 15px;
    color: #444;
    white-space: nowrap;
    letter-spacing: 0;
}

.z-label {
    width: 15px;
    padding-left: 2px;
    font-size: 11px;
}

.z-spin {
    width: 54px;
    height: 27px;
}

.z-spin .spin-val {
    text-align: right;
    padding: 0 6px 0 0;
}
```
